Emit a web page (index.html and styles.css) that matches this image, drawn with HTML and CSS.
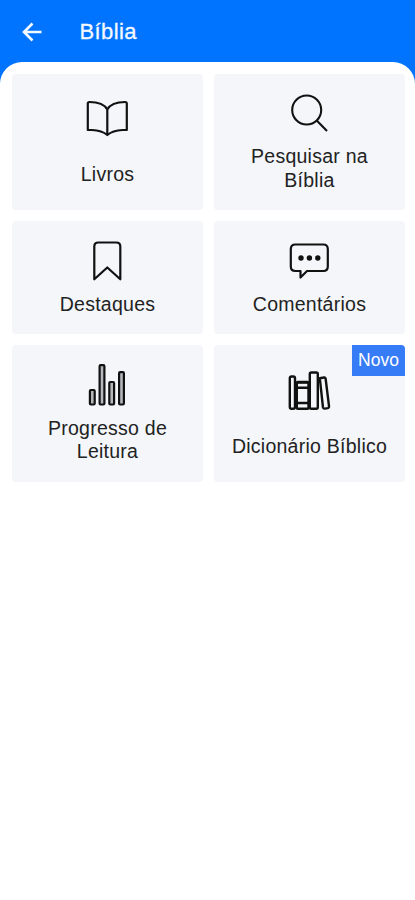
FILE: index.html
```html
<!DOCTYPE html>
<html lang="pt-BR">
<head>
  <meta charset="utf-8"/>
  <meta name="viewport" content="width=device-width, initial-scale=1">
  <title>Bíblia</title>
  <link rel="stylesheet" href="styles.css">
</head>
<body>
	<header class="topbar">
		<svg class="back" viewBox="0 0 20 20"><path d="M19.500 10H2M10.500 1.500L2 10L10.500 18.500"/></svg>
		<h1>Bíblia</h1>
	</header>

	<main class="sheet">
		<div class="grid">
			<div class="card spaced">
				<svg class="icon" viewBox="0 0 44 44">
					<path d="M21.300 12.500C18 6.500 12 5 3.500 5Q1.800 5 1.800 6.500V33H6Q16 33.500 21.300 38Q26.600 33.500 36.600 33H40.800V6.500Q40.800 5 39.200 5C31 5 24.600 6.500 21.300 12.500V38"/>
				</svg>
				<span class="label">Livros</span>
			</div>

			<div class="card">
				<svg class="icon thin" viewBox="0 0 44 44">
					<circle cx="18.700" cy="19" r="14.500"/>
					<path d="M28.700 29.500L39 40"/>
				</svg>
				<span class="label">Pesquisar na<br>Bíblia</span>
			</div>

			<div class="card">
				<svg class="icon" viewBox="0 0 44 44">
					<path d="M8.300 40.300V7.500Q8.300 3.500 12.300 3.500H30.300Q34.300 3.500 34.300 7.500V40.300L21.300 28.500Z"/>
				</svg>
				<span class="label">Destaques</span>
			</div>

			<div class="card">
				<svg class="icon" viewBox="0 0 44 44">
					<path d="M7.300 5.500H35.300Q39.800 5.500 39.800 10V27.500Q39.800 32 35.300 32H19L12.500 38.500V32H7.300Q2.800 32 2.800 27.500V10Q2.800 5.500 7.300 5.500Z"/>
					<g class="solid">
						<circle cx="13" cy="19" r="2.700"/>
						<circle cx="21.400" cy="19" r="2.700"/>
						<circle cx="29.800" cy="19" r="2.700"/>
					</g>
				</svg>
				<span class="label">Comentários</span>
			</div>

			<div class="card">
				<svg class="icon bars" viewBox="0 0 44 44">
					<rect x="3.900" y="27" width="4.800" height="14.500" rx="1"/>
					<rect x="13.600" y="2.200" width="4.800" height="39.300" rx="1"/>
					<rect x="23.300" y="19" width="4.800" height="22.500" rx="1"/>
					<rect x="33.100" y="9.200" width="4.800" height="32.300" rx="1"/>
				</svg>
				<span class="label">Progresso de<br>Leitura</span>
			</div>

			<div class="card spaced">
				<span class="badge">Novo</span>
				<svg class="icon books" viewBox="0 0 44 44">
					<rect x="1.800" y="7.500" width="5.200" height="32.200" rx="1.800"/>
					<path d="M9 13.500H20M9 18.800H20M9 34H20"/>
					<rect x="8.800" y="13" width="11.700" height="26.700" rx="1"/>
					<rect x="21.800" y="3.500" width="8" height="36.200" rx="1.500"/>
					<path d="M31.800 9.200L36 8.500Q37.300 8.400 37.600 9.500L41 37Q41.200 38.800 39.800 39.100L36.800 39.600Q35.300 39.700 35 38.500Z"/>
				</svg>
				<span class="label">Dicionário Bíblico</span>
			</div>
		</div>
	</main>
</body>
</html>
```
FILE: styles.css
```css
	* {
		box-sizing: border-box;
	}

	body {
		margin: 0;
		min-height: 100vh;
		display: flex;
		flex-direction: column;
		background-color: #0074ff;
		color: #222222;
		font-family: "Liberation Sans", Arial, sans-serif;
	}

	.topbar {
		height: 62px;
		display: flex;
		align-items: center;
		gap: 38px;
		padding: 1px 0 0 21.5px;
		color: #f4f8ff;
	}

	.topbar h1 {
		margin: 0;
		font-size: 22px;
		font-weight: normal;
		letter-spacing: 0.4px;
		-webkit-text-stroke: 0.3px currentColor;
	}

	.back {
		width: 20px;
		height: 20px;
		fill: none;
		stroke: currentColor;
		stroke-width: 2.6;
	}

	.sheet {
		flex: 1;
		padding: 11.5px 10px 0 12px;
		background-color: #ffffff;
		border-radius: 22px 22px 0 0;
	}

	.grid {
		display: grid;
		grid-template-columns: 1fr 1fr;
		grid-template-rows: 136px 113.5px 136.5px;
		gap: 11px;
	}

	.card {
		position: relative;
		display: flex;
		flex-direction: column;
		align-items: center;
		justify-content: center;
		gap: 10px;
		background-color: #f4f6fa;
		border-radius: 4px;
		overflow: hidden;
	}

	.card.spaced {
		gap: 22px;
	}

	.label {
		font-size: 19.5px;
		line-height: 23.5px;
		letter-spacing: 0.25px;
		text-align: center;
	}

	.icon {
		width: 44px;
		height: 44px;
		fill: none;
		stroke: #111111;
		stroke-width: 2.2;
		stroke-linejoin: round;
	}

	.icon.thin {
		stroke-width: 2.1;
	}

	.icon.bars {
		fill: #b5b7ba;
	}

	.icon.books {
		stroke-width: 2.4;
	}

	.solid {
		fill: #111111;
		stroke: none;
	}

	.badge {
		position: absolute;
		top: 0;
		right: 0;
		width: 53px;
		height: 31px;
		line-height: 30px;
		font-size: 17.5px;
		text-align: center;
		color: #ffffff;
		background-color: #367cf6;
	}
```
